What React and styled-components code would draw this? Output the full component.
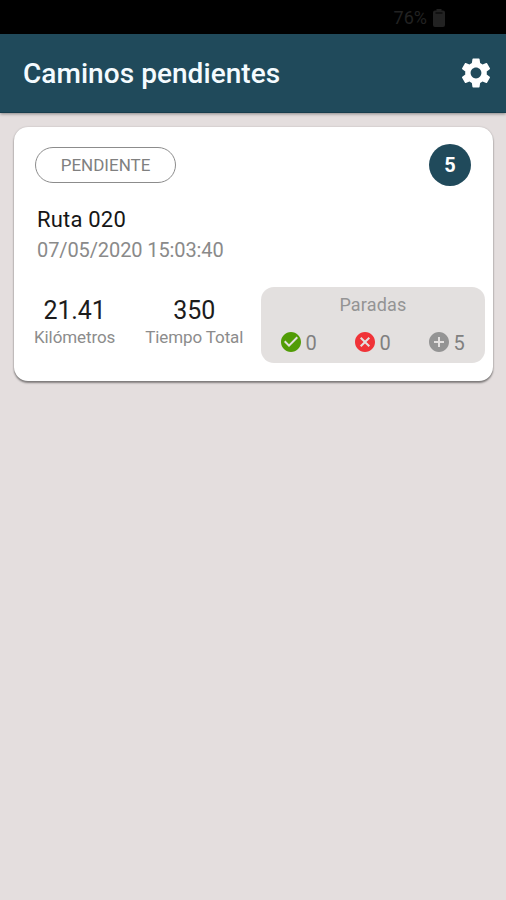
import React from "react";
import styled, { createGlobalStyle } from "styled-components";
import {
  MdSettings,
  MdCheckCircle,
  MdCancel,
  MdAddCircle,
} from "react-icons/md";

const GlobalStyle = createGlobalStyle`
  * {
    box-sizing: border-box;
  }
  body {
    margin: 0;
    background-color: #e4dede;
    font-family: Roboto, "Liberation Sans", sans-serif;
  }
`;

const Container = styled.div`
  min-height: 100vh;
  background-color: #e4dede;
`;

const StatusBar = styled.div`
  height: 34px;
  padding: 2px 61px 0 0;
  display: flex;
  align-items: center;
  justify-content: flex-end;
  gap: 6px;
  background-color: #000000;
  color: #222222;
`;

const BatteryLevel = styled.span`
  font-size: 18px;
  line-height: 20px;
`;

const Header = styled.header`
  height: 79px;
  padding: 0 12px 0 23px;
  display: flex;
  align-items: center;
  justify-content: space-between;
  background-color: #204a5b;
  border-bottom: 1px solid #173d4d;
  box-shadow: 0 1px 3px rgba(0, 0, 0, 0.4);
`;

const Title = styled.h1`
  margin: 0;
  padding-top: 2px;
  font-size: 28px;
  font-weight: 500;
  line-height: 32px;
  letter-spacing: 0.05px;
  color: #f4fbff;
`;

const SettingsButton = styled.button`
  display: flex;
  padding: 0;
  border: none;
  background: none;
  color: #ffffff;
  cursor: pointer;
`;

const Card = styled.section`
  margin: 14px 13px 0 14px;
  height: 254px;
  padding: 17px 8px 0 20px;
  border-radius: 14px;
  background-color: #ffffff;
  box-shadow: 0 2px 2px rgba(0, 0, 0, 0.42), 0 0 2px rgba(0, 0, 0, 0.2);
`;

const CardTop = styled.div`
  display: flex;
  align-items: center;
  justify-content: space-between;
  padding: 0 14px 0 1px;
`;

const Status = styled.span`
  width: 141px;
  height: 36px;
  border: 1px solid #8c8c8c;
  border-radius: 18px;
  font-size: 17px;
  line-height: 34px;
  text-align: center;
  color: #808080;
`;

const Badge = styled.span`
  width: 42px;
  height: 42px;
  border-radius: 50%;
  font-size: 20px;
  font-weight: 700;
  line-height: 42px;
  text-align: center;
  background-color: #204a5b;
  color: #ffffff;
`;

const RouteName = styled.h2`
  margin: 20px 0 0 3px;
  font-size: 22px;
  font-weight: 400;
  line-height: 28px;
  letter-spacing: 0.2px;
  color: #161616;
`;

const RouteDate = styled.div`
  margin: 3px 0 0 3px;
  font-size: 20px;
  line-height: 26px;
  letter-spacing: -0.1px;
  color: #8a8a8a;
`;

const Bottom = styled.div`
  display: flex;
  justify-content: space-between;
  margin-top: 24px;
`;

const Stats = styled.div`
  display: flex;
  gap: 30px;
  padding-top: 9px;
`;

const Stat = styled.div`
  display: flex;
  flex-direction: column;
  align-items: center;
`;

const StatValue = styled.div`
  font-size: 25px;
  line-height: 29px;
  letter-spacing: -0.1px;
  color: #1c1c1c;
`;

const StatLabel = styled.div`
  font-size: 17px;
  line-height: 24px;
  letter-spacing: -0.1px;
  color: #8c8c8c;
`;

const Stops = styled.div`
  width: 224px;
  height: 76px;
  padding-top: 6px;
  border-radius: 13px;
  background-color: #e3e0df;
`;

const StopsTitle = styled.div`
  font-size: 18px;
  line-height: 24px;
  letter-spacing: 0.2px;
  text-align: center;
  color: #949494;
`;

const StopsRow = styled.div`
  display: flex;
  margin-top: 13px;
  padding-right: 2px;
`;

const Stop = styled.div`
  flex: 1;
  display: flex;
  align-items: center;
  justify-content: center;
  gap: 2px;
  color: ${(props) => props.$color};
`;

const StopCount = styled.span`
  font-size: 20px;
  line-height: 21px;
  padding-top: 3px;
  color: #808080;
`;

const BatteryIcon = () => (
  <svg width="12" height="18" viewBox="0 0 12 18" fill="currentColor">
    <path d="M3.5 0h5v1.5H10a2 2 0 0 1 2 2V16a2 2 0 0 1-2 2H2a2 2 0 0 1-2-2V3.5a2 2 0 0 1 2-2h1.5z" />
    <path d="M2.5 4h7" stroke="#000000" strokeWidth="1" />
  </svg>
);

const stops = [
  { id: "done", icon: MdCheckCircle, color: "#519c06", count: 0 },
  { id: "failed", icon: MdCancel, color: "#f03338", count: 0 },
  { id: "left", icon: MdAddCircle, color: "#949494", count: 5 },
];

const App = () => {
  return (
    <>
      <GlobalStyle />
      <Container>
        <StatusBar>
          <BatteryLevel>76%</BatteryLevel>
          <BatteryIcon />
        </StatusBar>
        <Header>
          <Title>Caminos pendientes</Title>
          <SettingsButton aria-label="Ajustes">
            <MdSettings size={36} />
          </SettingsButton>
        </Header>
        <Card>
          <CardTop>
            <Status>PENDIENTE</Status>
            <Badge>5</Badge>
          </CardTop>
          <RouteName>Ruta 020</RouteName>
          <RouteDate>07/05/2020 15:03:40</RouteDate>
          <Bottom>
            <Stats>
              <Stat>
                <StatValue>21.41</StatValue>
                <StatLabel>Kilómetros</StatLabel>
              </Stat>
              <Stat>
                <StatValue>350</StatValue>
                <StatLabel>Tiempo Total</StatLabel>
              </Stat>
            </Stats>
            <Stops>
              <StopsTitle>Paradas</StopsTitle>
              <StopsRow>
                {stops.map(({ id, icon: Icon, color, count }) => (
                  <Stop key={id} $color={color}>
                    <Icon size={24} />
                    <StopCount>{count}</StopCount>
                  </Stop>
                ))}
              </StopsRow>
            </Stops>
          </Bottom>
        </Card>
      </Container>
    </>
  );
};

export default App;
